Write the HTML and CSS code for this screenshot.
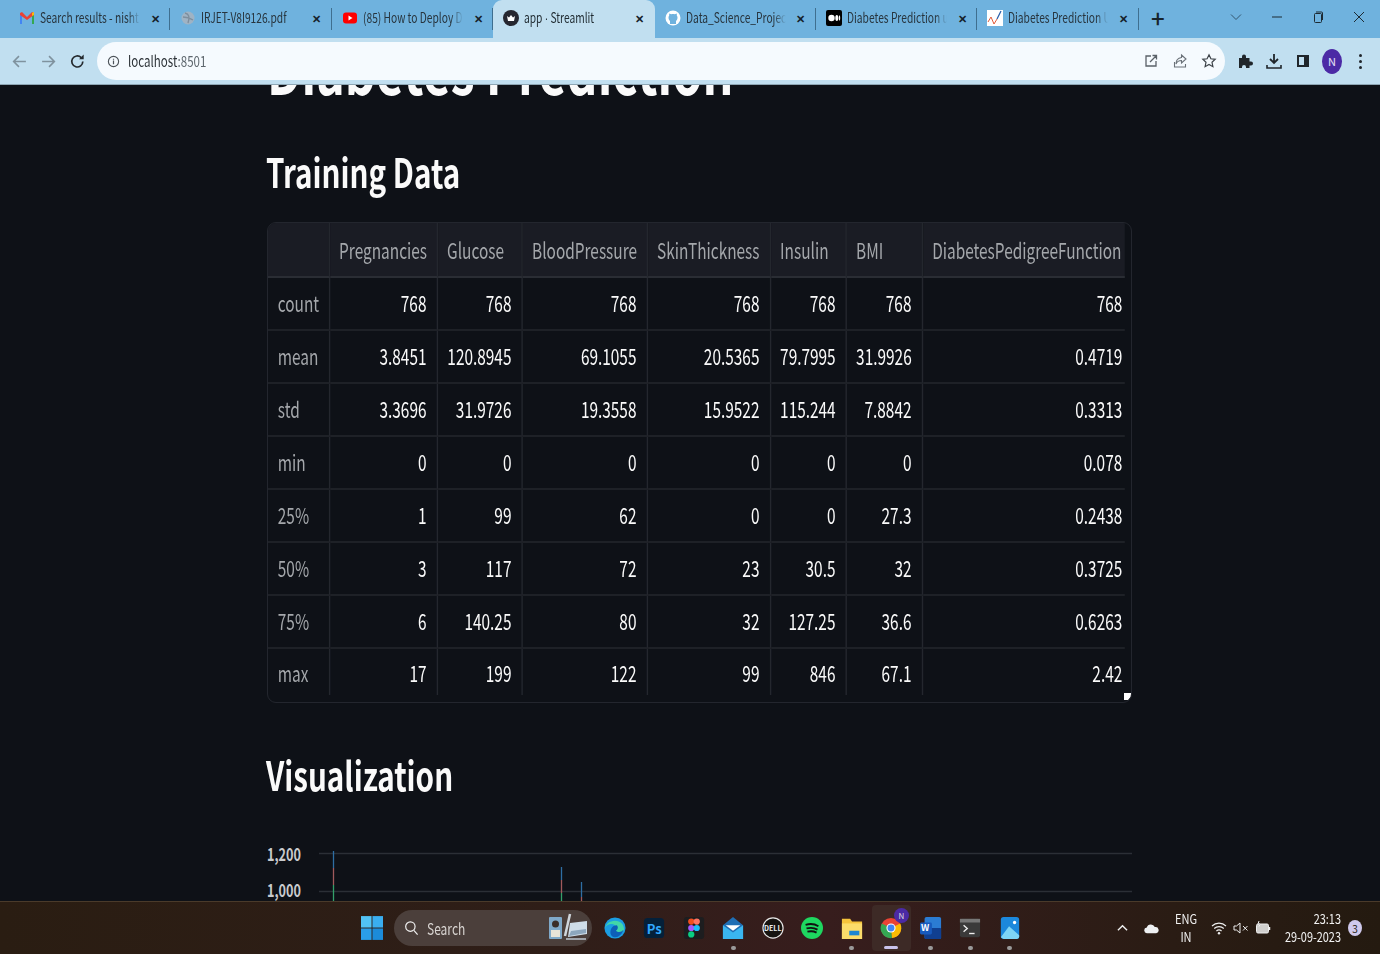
FILE: index.html
```html
<!DOCTYPE html>
<html lang="en">
<head>
<meta charset="utf-8">
<title>app · Streamlit</title>
<link rel="stylesheet" href="styles.css">
</head>
<body>
<div class="window">
  <div class="tabstrip">
    <div class="tab first"><svg class="fav" viewBox="0 0 16 16"><path d="M1 14V3l2 0v11z" fill="#4285f4"/><path d="M13 14V3l2 0v11z" fill="#34a853"/><path d="M1 3l2-1 5 5 5-5 2 1v2l-7 5-7-5z" fill="#ea4335"/><path d="M13 3l2-1v3l-2 1z" fill="#fbbc04"/></svg><span class="tab-label">Search results - nisht</span><span class="x">✕</span></div>
    <div class="tab"><svg class="fav" viewBox="0 0 16 16"><circle cx="8" cy="8" r="6.5" fill="#9fb3c4"/><path d="M5 3c4 1 5 4 3 10M3 7c3 0 7 1 10 3" stroke="#7e8f9e" stroke-width="1.4" fill="none"/></svg><span class="tab-label">IRJET-V8I9126.pdf</span><span class="x">✕</span></div>
    <div class="tab"><svg class="fav" viewBox="0 0 16 16"><rect x="1" y="2.5" width="14" height="11" rx="3" fill="#f00"/><path d="M6.5 5.5l4 2.5-4 2.5z" fill="#fff"/></svg><span class="tab-label">(85) How to Deploy D</span><span class="x">✕</span></div>
    <div class="tab active"><svg class="fav" viewBox="0 0 16 16"><circle cx="8" cy="8" r="8" fill="#262730"/><path d="M4 6l2 1.5L8 5l2 2.500L12 6l-1 5H5z" fill="#fff"/></svg><span class="tab-label">app <span class="mid">·</span> Streamlit</span><span class="x">✕</span></div>
    <div class="tab"><svg class="fav" viewBox="0 0 16 16"><circle cx="8" cy="8" r="7.500" fill="#fff"/><path d="M5 14v-3c-1-1-1.500-2-1.500-3.500 0-.8.2-1.500.7-2l0-2 2 .8c1-.3 2.600-.3 3.600 0l2-.8 0 2c.5.500.7 1.200.7 2 0 1.500-.5 2.500-1.500 3.500v3z" fill="#6fb2de"/></svg><span class="tab-label">Data_Science_Project</span><span class="x">✕</span></div>
    <div class="tab"><svg class="fav" viewBox="0 0 16 16"><rect width="16" height="16" rx="2" fill="#000"/><circle cx="5.500" cy="8" r="3.200" fill="#fff"/><ellipse cx="10.800" cy="8" rx="1.500" ry="3" fill="#fff"/><ellipse cx="13.500" cy="8" rx=".7" ry="2.700" fill="#fff"/></svg><span class="tab-label">Diabetes Prediction u</span><span class="x">✕</span></div>
    <div class="tab"><svg class="fav" viewBox="0 0 16 16"><rect width="16" height="16" fill="#fff"/><path d="M1 12l3-5 3 7 3-5" stroke="#e25b3a" stroke-width="1" fill="none"/><path d="M10 9l4-8" stroke="#2a5fa8" stroke-width="1.200" fill="none"/></svg><span class="tab-label">Diabetes Prediction U</span><span class="x">✕</span></div>
    <div class="newtab">+</div>
    <div class="winctl">
      <svg class="ctl chev" viewBox="0 0 12 12"><path d="M1 3.500l5 5 5-5" stroke="#33566e" fill="none"/></svg>
      <svg class="ctl min" viewBox="0 0 12 12"><path d="M1 6h10" stroke="#1d2a33" stroke-width="1"/></svg>
      <svg class="ctl max" viewBox="0 0 12 12"><rect x="2.500" y="2.500" width="7" height="9" rx="1" stroke="#1d2a33" fill="none"/><path d="M4 1h5.500a1 1 0 0 1 1 1v7" stroke="#1d2a33" fill="none"/></svg>
      <svg class="ctl close" viewBox="0 0 12 12"><path d="M1 1l10 10M11 1L1 11" stroke="#1d2a33"/></svg>
    </div>
  </div>
  <div class="toolbar">
    <svg class="nav" viewBox="0 0 16 16"><path d="M14 8H2.500M7.500 3l-5 5 5 5" stroke="#7f929e" stroke-width="1.500" fill="none"/></svg>
    <svg class="nav" viewBox="0 0 16 16"><path d="M2 8h11.500M8.500 3l5 5-5 5" stroke="#7f929e" stroke-width="1.500" fill="none"/></svg>
    <svg class="nav" viewBox="0 0 16 16"><path d="M13 8a5.200 5.200 0 1 1-1.500-3.700" stroke="#24292d" stroke-width="1.600" fill="none"/><path d="M13.800 1.500v4.300H9.500z" fill="#24292d"/></svg>
    <div class="omnibox">
      <svg class="info" viewBox="0 0 14 14"><circle cx="7" cy="7" r="5.500" stroke="#4c5359" stroke-width="1.200" fill="none"/><path d="M7 6v4M7 4v1.200" stroke="#4c5359" stroke-width="1.300"/></svg>
      <span class="url">localhost<span class="port">:8501</span></span>
      <span class="omni-actions">
        <svg class="omni-ico" viewBox="0 0 16 16"><path d="M8 3H3v10h10V8M7 9l6-6M9.500 2.500h4v4" stroke="#5a6168" stroke-width="1.300" fill="none"/></svg>
        <svg class="omni-ico" viewBox="0 0 16 16"><path d="M2.500 9v5h11V11M9.500 2l4.500 4-4.500 4V7.500C7 7.500 5 8.500 4 11c0-4 2-6 5.500-6.500z" stroke="#6a7178" stroke-width="1.100" fill="none"/></svg>
        <svg class="omni-ico" viewBox="0 0 16 16"><path d="M8 1.800l1.900 4 4.300.5-3.200 3 .9 4.400L8 11.500l-3.900 2.200.9-4.400-3.200-3 4.300-.5z" stroke="#3c4248" stroke-width="1.200" fill="none"/></svg>
      </span>
    </div>
    <div class="tool-actions">
      <svg class="tool-ico" viewBox="0 0 16 16"><path d="M2 5h3V3.500a2 2 0 0 1 4 0V5h3.500v3.500H14a2 2 0 0 1 0 4h-1.500V15H9v-1a2 2 0 0 0-4 0v1H2z" fill="#20262b"/></svg>
      <svg class="tool-ico" viewBox="0 0 16 16"><path d="M8 1v8.500M4 6l4 4 4-4" stroke="#20262b" stroke-width="1.800" fill="none"/><path d="M1 12v3h14v-3" stroke="#20262b" stroke-width="1.600" fill="none"/></svg>
      <svg class="tool-ico" viewBox="0 0 16 16"><path d="M2 2h12v12H2z" fill="#20262b"/><rect x="4" y="4" width="5" height="8" fill="#c1dff0"/></svg>
      <span class="avatar">N</span>
      <span class="menu-dots"><i></i><i></i><i></i></span>
    </div>
  </div>
  <main class="page">
    <h1 class="title">Diabetes Prediction</h1>
    <h2 class="section training">Training Data</h2>
    <div class="frame">
      <table class="stats">
        <colgroup><col class="c0"><col class="c1"><col class="c2"><col class="c3"><col class="c4"><col class="c5"><col class="c6"><col class="c7"></colgroup>
        <thead><tr><th></th><th>Pregnancies</th><th>Glucose</th><th>BloodPressure</th><th>SkinThickness</th><th>Insulin</th><th>BMI</th><th>DiabetesPedigreeFunction</th></tr></thead>
        <tbody>
          <tr><th>count</th><td>768</td><td>768</td><td>768</td><td>768</td><td>768</td><td>768</td><td>768</td></tr>
          <tr><th>mean</th><td>3.8451</td><td>120.8945</td><td>69.1055</td><td>20.5365</td><td>79.7995</td><td>31.9926</td><td>0.4719</td></tr>
          <tr><th>std</th><td>3.3696</td><td>31.9726</td><td>19.3558</td><td>15.9522</td><td>115.244</td><td>7.8842</td><td>0.3313</td></tr>
          <tr><th>min</th><td>0</td><td>0</td><td>0</td><td>0</td><td>0</td><td>0</td><td>0.078</td></tr>
          <tr><th>25%</th><td>1</td><td>99</td><td>62</td><td>0</td><td>0</td><td>27.3</td><td>0.2438</td></tr>
          <tr><th>50%</th><td>3</td><td>117</td><td>72</td><td>23</td><td>30.5</td><td>32</td><td>0.3725</td></tr>
          <tr><th>75%</th><td>6</td><td>140.25</td><td>80</td><td>32</td><td>127.25</td><td>36.6</td><td>0.6263</td></tr>
          <tr><th>max</th><td>17</td><td>199</td><td>122</td><td>99</td><td>846</td><td>67.1</td><td>2.42</td></tr>
        </tbody>
      </table>
      <svg class="resize" viewBox="0 0 7 7"><path d="M7 0v4L4 7H0V0z" fill="#fff"/></svg>
    </div>
    <h2 class="section viz">Visualization</h2>
    <svg class="chart" viewBox="0 0 866 60" width="866" height="60">
      <path class="grid" d="M52 7.500H865M52 45.500H865"/>
      <text class="tick" x="0" y="15" textLength="34" lengthAdjust="spacingAndGlyphs">1,200</text>
      <text class="tick" x="0" y="51" textLength="34" lengthAdjust="spacingAndGlyphs">1,000</text>
      <path class="bar" d="M66.500 5v17" stroke="#2e6ea3"/><path class="bar" d="M66.500 22v17" stroke="#a05a5c"/><path class="bar" d="M66.500 39v21" stroke="#34a06a"/>
      <path class="bar" d="M294.500 21v13" stroke="#2e6ea3"/><path class="bar" d="M294.500 34v13" stroke="#a05a5c"/><path class="bar" d="M294.500 47v13" stroke="#34a06a"/>
      <path class="bar" d="M314.500 36v15" stroke="#2e6ea3"/><path class="bar" d="M314.500 51v9" stroke="#a05a5c"/>
    </svg>
  </main>
  <footer class="taskbar">
    <svg class="start" viewBox="0 0 24 26"><rect x="0" y="0" width="11.500" height="12.500" fill="#52c3f5"/><rect x="12.500" y="0" width="11.500" height="12.500" fill="#3aaef0"/><rect x="0" y="13.500" width="11.500" height="12.500" fill="#2a9ee8"/><rect x="12.500" y="13.500" width="11.500" height="12.500" fill="#1c8bd9"/></svg>
    <div class="search">
      <svg class="search-ico" viewBox="0 0 16 16"><circle cx="6.800" cy="6.500" r="5" stroke="#f0f0f0" stroke-width="1.300" fill="none"/><path d="M10.500 10.500l4 4.500" stroke="#f0f0f0" stroke-width="1.300"/></svg>
      <span class="search-text">Search</span>
      <svg class="search-art" viewBox="0 0 40 30"><rect x="1" y="4" width="13" height="22" rx="1" fill="#7fa9c9"/><circle cx="7.500" cy="11" r="3.500" fill="#3a2d28"/><rect x="3" y="17" width="9" height="7" fill="#e8e4d8"/><path d="M22 1l-5 22" stroke="#cfd6dc" stroke-width="2.500"/><path d="M22 10l17-2v13l-19 3z" fill="#cfdde8"/><path d="M23 18l15-2v4l-17 3z" fill="#8da7bd"/><path d="M18 26h20" stroke="#bcc7d0" stroke-width="1.500"/></svg>
    </div>
    <div class="apps">
      <span class="app"><svg viewBox="0 0 24 24"><circle cx="12" cy="12" r="11.500" fill="#1b9de2"/><path d="M22 14c0-6-4-10-10-10C6 4 2 8 1 12c2-4 6-5 9-4 3 1 5 4 3 7-1 2 3 4 6 2z" fill="#42d6a8"/><path d="M7 17c0-5 3-8 7-8 2 2 1 5-1 6 2 2 6 2 8-1-1 5-6 9-10 8-3-.5-4-3-4-5z" fill="#0d5fb8"/></svg></span>
      <span class="app"><svg viewBox="0 0 24 24"><rect x="1" y="1" width="22" height="22" rx="4" fill="#04203a"/></svg><b class="ps">Ps</b></span>
      <span class="app"><svg viewBox="0 0 24 24"><rect x="1" y="0" width="22" height="24" rx="3" fill="#1d1d1f"/><circle cx="9" cy="5" r="3.400" fill="#f24e1e"/><circle cx="15" cy="5" r="3.400" fill="#ff7262"/><circle cx="9" cy="12" r="3.400" fill="#a259ff"/><circle cx="15" cy="12" r="3.400" fill="#1abcfe"/><circle cx="9" cy="19" r="3.400" fill="#0acf83"/></svg></span>
      <span class="app dot"><svg viewBox="0 0 24 24"><path d="M1 9l11-9 11 9v15H1z" fill="#1f6fb5"/><path d="M1 9l11 8 11-8v15H1z" fill="#3ab6f0"/><path d="M4 9h16l-8 6z" fill="#fff"/></svg></span>
      <span class="app"><svg viewBox="0 0 24 24"><circle cx="12" cy="12" r="11" stroke="#e6e6e6" stroke-width="1.300" fill="#161310"/></svg><b class="dell">DELL</b></span>
      <span class="app"><svg viewBox="0 0 24 24"><circle cx="12" cy="12" r="12" fill="#1ed760"/><path d="M5 8.500c5-1.500 10-1 14 1.500M6 12.500c4-1 8.500-.8 12 1.300M7 16c3.500-.8 7-.6 10 1" stroke="#111" stroke-width="2" fill="none"/></svg></span>
      <span class="app dot"><svg viewBox="0 0 24 24"><path d="M1 2h9l2 3h11v19H1z" fill="#f5c33b"/><path d="M1 7h22v17H1z" fill="#fbdc6a"/><rect x="9" y="15" width="11" height="5" fill="#1c86d1"/></svg></span>
      <span class="app current"><svg viewBox="0 0 24 24"><circle cx="12" cy="12" r="11" fill="#ea4335"/><path d="M12 12L22 7a11 11 0 0 1-9 16z" fill="#fbbc04"/><path d="M12 12l1 11A11 11 0 0 1 2 7z" fill="#34a853"/><circle cx="12" cy="12" r="5" fill="#fff"/><circle cx="12" cy="12" r="3.800" fill="#4285f4"/></svg><span class="badge-n">N</span></span>
      <span class="app dot"><svg viewBox="0 0 24 24"><rect x="5" y="0" width="18" height="24" rx="2" fill="#2b7cd3"/><rect x="5" y="12" width="18" height="12" rx="1" fill="#103f91"/><rect x="0" y="6" width="13" height="13" rx="1.500" fill="#185abd"/></svg><b class="word">W</b></span>
      <span class="app dot"><svg viewBox="0 0 24 24"><rect x="1" y="2" width="22" height="20" rx="2" fill="#3a3a3a"/><rect x="1" y="2" width="22" height="4" fill="#777"/><path d="M5 9l4 3.500L5 16" stroke="#eee" stroke-width="1.500" fill="none"/><path d="M11 18h6" stroke="#eee" stroke-width="1.500"/></svg></span>
      <span class="app dot"><svg viewBox="0 0 24 24"><rect x="2" y="0" width="20" height="24" rx="3" fill="#1c88dc"/><path d="M2 22l9-12 11 10v1a3 3 0 0 1-3 3H5z" fill="#7ed4f5"/><circle cx="17" cy="6" r="1.800" fill="#fff"/></svg></span>
    </div>
    <div class="tray">
      <svg class="tray-chev" viewBox="0 0 12 8"><path d="M1 6.500L6 1.500l5 5" stroke="#f0f0f0" stroke-width="1.500" fill="none"/></svg>
      <svg class="cloud" viewBox="0 0 16 11"><path d="M3.500 10.500a3 3 0 0 1-.5-6A4.500 4.500 0 0 1 11.500 4 3.300 3.300 0 0 1 13 10.500z" fill="#eef0f2"/></svg>
      <div class="lang"><span>ENG</span><span>IN</span></div>
      <svg class="sys wifi" viewBox="0 0 16 14"><path d="M1 5a10 10 0 0 1 14 0M3.200 7.500a7 7 0 0 1 9.600 0M5.400 10a4 4 0 0 1 5.200 0" stroke="#eee" stroke-width="1.100" fill="none"/><circle cx="8" cy="12.300" r="1.200" fill="#eee"/></svg>
      <svg class="sys" viewBox="0 0 16 14"><path d="M1 5v4h2.500L7 12V2L3.500 5z" stroke="#eee" fill="none"/><path d="M10 5l4.500 4.500M14.500 5L10 9.500" stroke="#eee"/></svg>
      <svg class="sys" viewBox="0 0 16 14"><rect x="1.500" y="3" width="12" height="9" rx="1.500" stroke="#eee" fill="#eee" fill-opacity=".85"/><path d="M14.500 6v3" stroke="#eee" stroke-width="1.500"/><path d="M4 0l-1 3h2l-1 3" stroke="#eee"/></svg>
      <div class="clock"><span>23:13</span><span>29-09-2023</span></div>
      <span class="notif">3</span>
    </div>
  </footer>
</div>
</body>
</html>
```

FILE: styles.css
```css
* { box-sizing: border-box; }
html, body { margin: 0; height: 100%; overflow: hidden; }
body { font-family: "Noto Sans CJK SC", "Noto Sans", sans-serif; background: #0e1117; }
.window { width: 1380px; height: 954px; display: flex; flex-direction: column; overflow: hidden; }

/* tab strip */
.tabstrip { height: 38px; flex: none; background: #6fb2de; display: flex; align-items: flex-end; padding-left: 9px; }
.tab { width: 161.400px; height: 38px; display: flex; align-items: center; padding: 0 9px 3px 10px; font-size: 14px; color: #27343d; position: relative; }
.tab:not(.active)::after { content: ""; position: absolute; right: 0; top: 8px; height: 22px; width: 1px; background: #3f6f8f; }
.tab.active { background: #c1dff0; border-radius: 9px 9px 0 0; color: #1f2a30; }
.fav { width: 16px; height: 16px; flex: none; margin-right: 5px; }
.tab-label { flex: none; width: 137px; margin-right: -37px; padding-bottom: 2px; transform: scaleX(.73); transform-origin: left center; white-space: nowrap; overflow: hidden; -webkit-mask-image: linear-gradient(90deg, #000 88%, transparent); mask-image: linear-gradient(90deg, #000 88%, transparent); }
.mid { font-family: "Liberation Sans", sans-serif; }
.x { flex: none; margin-left: auto; font-size: 11px; font-weight: 700; color: #16222a; width: 12px; text-align: center; }
.newtab { width: 38px; height: 38px; line-height: 36px; text-align: center; font-size: 24px; color: #17242c; font-weight: 500; }
.winctl { display: flex; align-items: center; height: 38px; margin-left: auto; padding-right: 15px; gap: 29px; padding-bottom: 4px; }
.ctl { width: 12px; height: 12px; }

/* toolbar */
.toolbar { height: 47px; flex: none; background: #c1dff0; display: flex; align-items: center; padding-left: 11px; border-bottom: 1px solid #8ea6b4; }
.nav { width: 17px; height: 17px; margin-right: 12px; flex: none; }
.omnibox { width: 1128px; height: 38px; margin-left: -1px; background: #f5fafe; border-radius: 19px; display: flex; align-items: center; padding: 0 8px 0 10px; font-size: 15px; color: #2d3338; }
.info { width: 13px; height: 13px; margin-right: 8px; }
.url { padding-bottom: 2px; transform: scaleX(.77); transform-origin: left center; white-space: nowrap; }
.port { color: #5d666d; }
.omni-actions { margin-left: auto; display: flex; gap: 13px; }
.omni-ico { width: 16px; height: 16px; }
.tool-actions { display: flex; align-items: center; margin-left: 12px; gap: 13px; }
.tool-ico { width: 16px; height: 16px; }
.avatar { width: 20px; height: 25px; margin-left: -2px; border-radius: 50%; background: #4b2aa5; color: #e8e4f7; font-size: 11px; display: flex; align-items: center; justify-content: center; }
.menu-dots { display: flex; flex-direction: column; gap: 3px; width: 6px; margin-left: 4px; }
.menu-dots i { width: 3px; height: 3px; border-radius: 50%; background: #20262b; }

/* page */
.page { flex: 1; min-height: 0; overflow: hidden; padding-left: 267px; background: #0e1117; color: #fafafa; }
.title { margin: -40px 0 0; font-size: 64px; line-height: 44px; font-weight: 700; white-space: nowrap; height: 44px; transform: scaleX(.755); transform-origin: left top; }
.section { margin: 0; font-weight: 600; font-size: 40px; line-height: 50px; white-space: nowrap; transform: scaleX(.74); transform-origin: left top; }
.training { margin: 57px 0 0 -1px; }
.frame { position: relative; margin-top: 26px; width: 865px; height: 481px; border: 1px solid #23262e; border-radius: 9px; overflow: hidden; }
.stats { border-collapse: separate; border-spacing: 0; table-layout: fixed; width: 1224.400px; font-size: 22px; transform: scaleX(.7); transform-origin: left top; }
.c0 { width: 88.600px; } .c1 { width: 154.300px; } .c2 { width: 121.400px; } .c3 { width: 178.600px; } .c4 { width: 175.700px; } .c5 { width: 108.600px; } .c6 { width: 108.600px; } .c7 { width: 288.600px; }
.stats th, .stats td { height: 53px; padding: 0 14.500px 4px 13px; border-right: 2px solid #24272e; border-bottom: 2px solid #1e2127; font-weight: 400; white-space: nowrap; }
.stats thead th { height: 55px; padding-bottom: 2px; background: #1a1c24; color: #a4a7ab; text-align: left; border-bottom: 2px solid #2a2d34; }
.stats tbody th { color: #a4a7ab; text-align: left; padding-left: 14px; }
.stats td { text-align: right; color: #fafafa; }
.stats th:last-child, .stats td:last-child { border-right: 0; padding-right: 4px; }
.stats tbody tr:last-child > * { border-bottom: 0; height: 46px; padding-bottom: 0; }
.stats thead th:last-child { padding-right: 0; }
.resize { position: absolute; right: 0; bottom: 2px; width: 7px; height: 7px; }
.viz { margin-top: 46px; margin-left: -1px; }
.chart { display: block; margin-top: 47px; }
.grid { stroke: #2b2f36; stroke-width: 1.500; fill: none; }
.bar { stroke-width: 1.300; }
.tick { font-size: 18px; font-weight: 600; fill: #c8cacd; }

/* taskbar */
.taskbar { height: 53px; flex: none; display: flex; align-items: center; padding-left: 361px; color: #f2f2f2; background: linear-gradient(90deg, #2a1d12, #2f1e18 40%, #371d1d 60%, #2a1c14 85%, #241a10); border-top: 1px solid #4a3a2a; position: relative; }
.start { width: 22px; height: 24px; flex: none; }
.search { width: 198px; height: 36px; margin-left: 11px; border-radius: 18px; background: #4b3f3b; display: flex; align-items: center; padding-left: 10px; position: relative; }
.search-ico { width: 15px; height: 16px; }
.search-text { margin-left: 8px; font-size: 16px; color: #d9d5d2; transform: scaleX(.75); transform-origin: left center; }
.search-art { width: 40px; height: 30px; margin-left: auto; margin-right: 4px; }
.apps { display: flex; align-items: center; margin-left: 3px; }
.app { width: 39.500px; height: 36px; display: flex; align-items: center; justify-content: center; position: relative; }
.app svg { width: 22px; height: 26px; }
.app.dot::after { content: ""; position: absolute; left: 17px; bottom: -4px; width: 5px; height: 4px; border-radius: 2px; background: #9a9a9a; }
.app.current { background: #3d2a26; border-radius: 4px; height: 46px; }
.app.current::after { content: ""; position: absolute; left: 12px; bottom: 2px; width: 14px; height: 3px; border-radius: 2px; background: #c9c3ea; }
.ps { position: absolute; font-size: 13px; color: #31a8ff; font-weight: 700; }
.dell { position: absolute; font-size: 7px; color: #eee; font-weight: 700; }
.word { position: absolute; left: 10px; top: 11px; font-size: 9px; color: #fff; }
.badge-n { position: absolute; right: 2px; top: 3px; width: 15px; height: 15px; border-radius: 50%; background: #4b2aa5; color: #ddd; font-size: 8px; display: flex; align-items: center; justify-content: center; }
.tray { position: absolute; right: 0; top: 0; height: 52px; display: flex; align-items: center; }
.tray-chev { width: 11px; height: 8px; }
.cloud { width: 15px; height: 11px; margin-left: 16px; }
.lang { margin-left: 14px; display: flex; flex-direction: column; align-items: center; font-size: 13px; line-height: 18px; transform: scaleX(.85); }
.sys { width: 16px; height: 14px; margin-left: 6px; }
.wifi { margin-left: 12px; }
.clock { margin-left: 13px; width: 57px; display: flex; flex-direction: column; align-items: flex-end; font-size: 13px; line-height: 18px; white-space: nowrap; transform: scaleX(.84); transform-origin: right center; }
.notif { margin: 0 18px 0 7px; width: 14px; height: 16px; border-radius: 50%; background: #cfc9ec; color: #241a10; font-size: 10px; display: flex; align-items: center; justify-content: center; }
```
